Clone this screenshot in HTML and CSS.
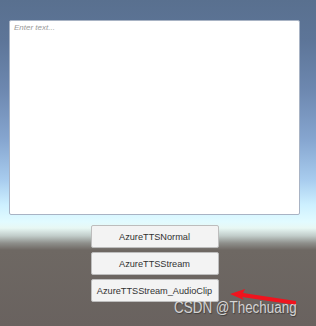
FILE: index.html
```html
<!DOCTYPE html>
<html>
<head>
<meta charset="utf-8">
<link rel="stylesheet" href="styles.css">
</head>
<body>
<div class="scene">
  <div class="panel">
    <div class="input"><span class="placeholder">Enter text...</span></div>
    <div class="buttons">
      <div class="btn">AzureTTSNormal</div>
      <div class="btn">AzureTTSStream</div>
      <div class="btn">AzureTTSStream_AudioClip</div>
    </div>
  </div>
  <svg class="arrow" width="70" height="20" viewBox="0 0 70 20">
    <polygon points="0,5 15,0 13,4 66,12 66,16 12,8 14,11" fill="#f0141e"/>
  </svg>
  <div class="watermark">CSDN @Thechuang</div>
</div>
</body>
</html>
```
FILE: styles.css
```css
html, body {
  margin: 0;
  padding: 0;
}
body {
  width: 316px;
  height: 326px;
  overflow: hidden;
  font-family: "Liberation Sans", Arial, sans-serif;
}
.scene {
  position: relative;
  width: 316px;
  height: 326px;
  background: linear-gradient(to bottom,
    #59708f 0px,
    #5d7598 40px,
    #6d88b0 90px,
    #86a6d0 140px,
    #a8ccee 180px,
    #cdf0ff 205px,
    #e2fbff 222px,
    #e8f8f4 228px,
    #c0cbc8 236px,
    #8f908c 243px,
    #6e6863 250px,
    #69625f 326px);
}
.panel {
  display: flex;
  flex-direction: column;
  align-items: center;
  padding: 20px 16px 0 9px;
}
.input {
  box-sizing: border-box;
  width: 291px;
  height: 195px;
  background: #fff;
  border: 1px solid #a8b3c4;
  border-radius: 2px;
  padding: 2px 4px;
  font-size: 8px;
  line-height: 10px;
}
.placeholder {
  font-style: italic;
  color: #9a9a9a;
}
.buttons {
  display: flex;
  flex-direction: column;
  gap: 4px;
  margin-top: 10px;
}
.btn {
  box-sizing: border-box;
  width: 128px;
  height: 23px;
  background: #f3f3f3;
  border: 1px solid #bdbdbd;
  border-radius: 2px;
  display: flex;
  align-items: center;
  justify-content: center;
  font-size: 9.2px;
  color: #323232;
}
.arrow {
  position: absolute;
  left: 230px;
  top: 289px;
}
.watermark {
  position: absolute;
  left: 174px;
  top: 299px;
  font-size: 16px;
  line-height: 18px;
  color: rgba(235, 235, 235, 0.85);
  text-shadow: 1px 1px 1px rgba(40, 40, 40, 0.6);
  white-space: nowrap;
  transform: scaleX(0.84);
  transform-origin: left top;
}
```
